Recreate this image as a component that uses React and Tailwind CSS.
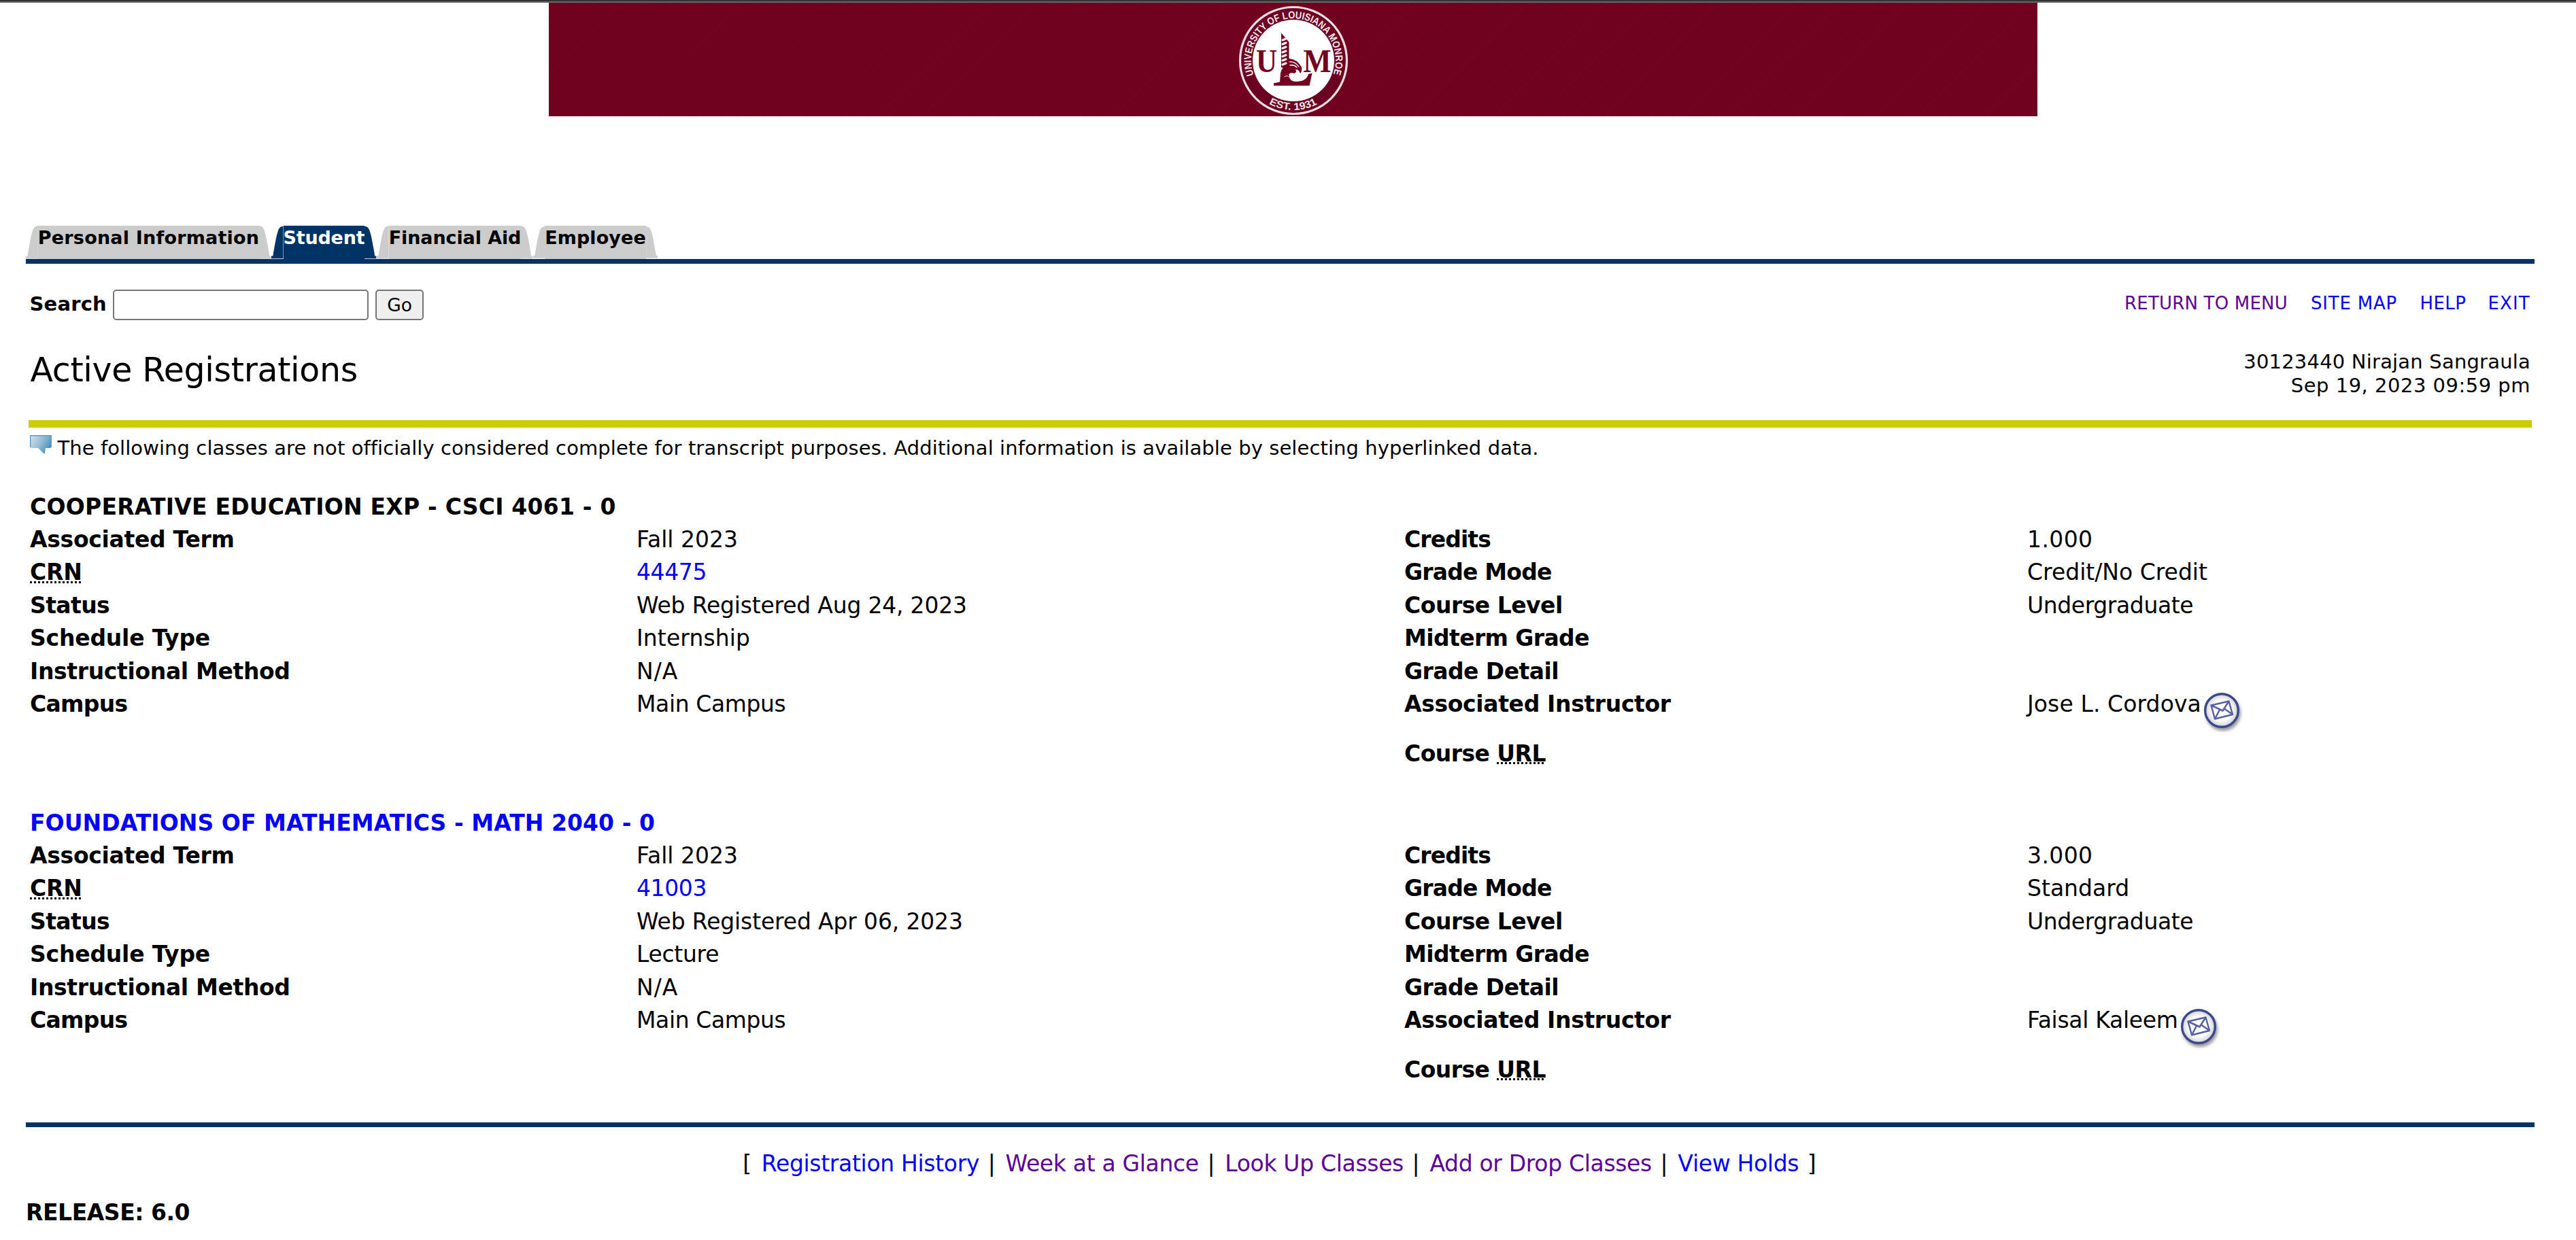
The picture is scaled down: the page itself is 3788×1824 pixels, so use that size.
const TABS = [
  { label: 'Personal Information', width: 'w-[361px]', tracking: 'tracking-[0.2px]' },
  { label: 'Student', width: 'w-[155px]', tracking: 'tracking-[-0.2px]', active: true },
  { label: 'Financial Aid', width: 'w-[230px]', tracking: 'tracking-[-0.1px]' },
  { label: 'Employee', width: 'w-[183px]', tracking: 'tracking-[0.1px]' },
];

const COURSES = [
  {
    title: 'COOPERATIVE EDUCATION EXP - CSCI 4061 - 0',
    titleClass: 'text-black tracking-[0.22px]',
    crn: '44475',
    status: 'Web Registered Aug 24, 2023',
    statusTracking: 'tracking-[-0.2px]',
    type: 'Internship',
    typeTracking: 'tracking-[0.1px]',
    credits: '1.000',
    mode: 'Credit/No Credit',
    instructor: 'Jose L. Cordova',
    instructorTracking: 'tracking-[0.1px]',
  },
  {
    title: 'FOUNDATIONS OF MATHEMATICS - MATH 2040 - 0',
    titleClass: 'text-[#0000ff] tracking-[0.06px]',
    crn: '41003',
    status: 'Web Registered Apr 06, 2023',
    statusTracking: 'tracking-[-0.15px]',
    type: 'Lecture',
    typeTracking: 'tracking-[-0.3px]',
    credits: '3.000',
    mode: 'Standard',
    instructor: 'Faisal Kaleem',
    instructorTracking: 'tracking-[-0.3px]',
  },
];

const FOOTER_LINKS = [
  { label: 'Registration History', color: 'text-[#0000ff]' },
  { label: 'Week at a Glance', color: 'text-[#5c0096]' },
  { label: 'Look Up Classes', color: 'text-[#5c0096]' },
  { label: 'Add or Drop Classes', color: 'text-[#5c0096]' },
  { label: 'View Holds', color: 'text-[#0000ff]' },
];

function Seal() {
  return (
    <svg className="mt-[4px] ml-[1014px] block h-[162px] w-[162px]" viewBox="-81 -81 162 162">
      <defs>
        <path id="seal-top" d="M-58.3 21.2 A62 62 0 1 1 58.3 21.2" />
        <path id="seal-bottom" d="M-36 63.5 A73 73 0 0 0 36 63.5" />
      </defs>
      <circle r="78.5" fill="#6b0022" stroke="#efdfe4" strokeWidth="3.2" />
      <circle r="60" fill="#fff" />
      <text fill="#f3e6ea" fontFamily="Liberation Sans, sans-serif" fontWeight="bold" fontSize="15">
        <textPath href="#seal-top" textLength="236" lengthAdjust="spacingAndGlyphs">UNIVERSITY OF LOUISIANA MONROE</textPath>
      </text>
      <text fill="#f3e6ea" fontFamily="Liberation Sans, sans-serif" fontWeight="bold" fontSize="15">
        <textPath href="#seal-bottom" textLength="74" lengthAdjust="spacingAndGlyphs">EST. 1931</textPath>
      </text>
      <g fill="#72001e">
        <text x="-55" y="16.5" fontFamily="Liberation Serif, serif" fontWeight="bold" fontSize="48" textLength="31" lengthAdjust="spacingAndGlyphs">U</text>
        <text x="14.5" y="16.5" fontFamily="Liberation Serif, serif" fontWeight="bold" fontSize="48" textLength="41" lengthAdjust="spacingAndGlyphs">M</text>
        <path d="M-20 -43 L-6.500 -27 L-6.500 22 Q-6 31 4 31 Q19 31 22 20 L27.500 18.500 L23.500 37 L-29 37 L-29 33.500 L-20 31.500 L-19 19 Q-18 13 -15 11 L-18 10 L-18 -40 Z" />
        <path d="M-7 -3 Q6 -2 12 10 Q13 16 10 19 Q8 13 3 13 Q6 17 1 19 Q-4 17 -7 20 Z" />
      </g>
      <g fill="none" stroke="#fff" strokeLinecap="round">
        <path d="M-16 -30 L-11 -32 M-16 -24 L-11 -26 M-16 -18 L-11 -20 M-16 -12 L-11 -14 M-16 -6 L-11 -8 M-16 0 L-11 -2 M-16 6 L-11 4" strokeWidth="3" />
        <path d="M-6 2 Q2 1 8 9" strokeWidth="1.200" />
        <path d="M-5 7 Q1 6 5 10" strokeWidth="1.500" />
        <path d="M-13 24 Q-9 21 -7 24" strokeWidth="1" />
      </g>
    </svg>
  );
}

function TabEdge({ fill, flip }) {
  return (
    <svg className={flip ? 'block h-[49px] w-[18px] -scale-x-100' : 'block h-[49px] w-[18px]'} viewBox="0 0 18 49">
      <path d="M18 0 C13 .5 11.500 3 10 7.500 C7.500 15 6.500 22 5 30 C4 36 3 40 2.500 45 H0 V49 H18 Z" fill={fill} />
    </svg>
  );
}

function Tab({ label, width, tracking, active }) {
  const fill = active ? '#003366' : '#cccccc';
  return (
    <div className={`flex h-[49px] ${width}`}>
      <TabEdge fill={fill} />
      <div
        className={`flex-1 whitespace-nowrap text-[27px] leading-[35px] font-bold ${tracking} ${
          active ? 'bg-[#003366] text-white' : 'bg-[#cccccc] text-black'
        }`}
      >
        {label}
      </div>
      <TabEdge fill={fill} flip />
    </div>
  );
}

function InfoBubble() {
  return (
    <svg className="mt-[1px] block h-[28px] w-[32px] shrink-0" viewBox="0 0 32 28">
      <defs>
        <linearGradient id="bubble" x1="0" y1="0" x2="1" y2="0.5">
          <stop offset="0" stopColor="#d3e3ee" />
          <stop offset="0.6" stopColor="#8fb9d3" />
          <stop offset="1" stopColor="#4f92bd" />
        </linearGradient>
      </defs>
      <path d="M.7 .7 H31.300 V17.500 Q31.300 19 29.500 19 H23 L22 27 H20 L12 19 H2.500 Q.7 19 .7 17.500 Z" fill="url(#bubble)" />
      <path d="M.7 18 V.7 H31.300 V18" fill="none" stroke="#5e9cc3" strokeWidth="1.400" />
    </svg>
  );
}

function MailIcon() {
  return (
    <svg className="mt-[3.5px] block h-[62px] w-[62px]" viewBox="0 0 62 62">
      <defs>
        <filter id="mail-shadow" x="-20%" y="-20%" width="150%" height="150%">
          <feDropShadow dx="2" dy="4" stdDeviation="2" floodColor="#555" floodOpacity="0.6" />
        </filter>
        <radialGradient id="mail-face">
          <stop offset="0.6" stopColor="#fff" />
          <stop offset="1" stopColor="#cfcfd6" />
        </radialGradient>
      </defs>
      <circle cx="30" cy="30" r="24.300" fill="url(#mail-face)" stroke="#3b4a8c" strokeWidth="3.400" filter="url(#mail-shadow)" />
      <g stroke="#5663a0" strokeWidth="2.500" strokeLinejoin="round">
        <path d="M14.500 22.500 L40.500 16.500 L46 36 L20 42.500 Z" fill="#fff" />
        <path d="M14.500 22.500 L31.500 30.500 L40.500 16.500 M27 29 L20 42.500 M34 27.500 L46 36" fill="none" />
      </g>
    </svg>
  );
}

function Row({ label, tracking, value, valueClass = '', label2, tracking2, value2, value2Class = '', tall }) {
  return (
    <div
      className={`grid grid-cols-[892px_1129px_916px_1fr] whitespace-nowrap ${tall ? 'h-[73px]' : 'h-[48.4px]'}`}
    >
      <div className={`font-bold ${tracking}`}>{label}</div>
      <div className={valueClass}>{value}</div>
      <div className={`font-bold ${tracking2}`}>{label2}</div>
      <div className={value2Class}>{value2}</div>
    </div>
  );
}

function Abbr({ children }) {
  return (
    <span className="relative inline-block">
      {children}
      <span className="absolute bottom-[9px] left-0 h-[3px] w-full bg-[repeating-linear-gradient(90deg,#000_0_3px,transparent_3px_6px)]" />
    </span>
  );
}

function Course({ course }) {
  return (
    <section className="h-[465px] pl-[44px] text-[33px] leading-[48.4px]">
      <h2 className={`h-[48.4px] font-bold whitespace-nowrap ${course.titleClass}`}>{course.title}</h2>
      <Row
        label="Associated Term" tracking="tracking-[-0.3px]" value="Fall 2023"
        label2="Credits" tracking2="tracking-[-0.9px]" value2={course.credits} value2Class="tracking-[0.4px]"
      />
      <Row
        label={<Abbr>CRN</Abbr>} tracking="tracking-[-0.2px]" value={course.crn} valueClass="text-[#0000ff] tracking-[-0.4px]"
        label2="Grade Mode" tracking2="tracking-[-0.8px]" value2={course.mode}
      />
      <Row
        label="Status" tracking="tracking-[-0.6px]" value={course.status} valueClass={course.statusTracking}
        label2="Course Level" tracking2="tracking-[-0.5px]" value2="Undergraduate" value2Class="tracking-[-0.4px]"
      />
      <Row
        label="Schedule Type" tracking="tracking-[-0.2px]" value={course.type} valueClass={course.typeTracking}
        label2="Midterm Grade" tracking2="tracking-[-0.6px]"
      />
      <Row
        label="Instructional Method" tracking="tracking-[-0.35px]" value="N/A" valueClass="tracking-[1px]"
        label2="Grade Detail" tracking2="tracking-[-0.55px]"
      />
      <Row
        tall
        label="Campus" tracking="tracking-[-0.7px]" value="Main Campus" valueClass="tracking-[-0.4px]"
        label2="Associated Instructor" tracking2="tracking-[-0.35px]"
        value2={<>{course.instructor}<MailIcon /></>} value2Class={`flex items-start ${course.instructorTracking}`}
      />
      <Row label2={<>Course <Abbr>URL</Abbr></>} tracking2="tracking-[-0.55px]" />
    </section>
  );
}

export default function App() {
  return (
    <div className="h-[1824px] w-[3788px] overflow-hidden bg-white font-['DejaVu_Sans',Verdana,sans-serif] text-black">
      <div className="h-[4px] border-b-2 border-[#666666] bg-[#333333]" />
      <header className="ml-[807px] flex h-[167px] w-[2189px] bg-[#72001e] bg-[repeating-linear-gradient(135deg,#72001e_0_6px,#68061f_7px_8px,#72001e_9px)]">
        <Seal />
      </header>

      <nav className="mt-[161px] mr-[61px] ml-[38px] flex border-b-[7px] border-[#003366]">
        {TABS.map((tab) => (
          <Tab key={tab.label} {...tab} />
        ))}
      </nav>

      <div className="mt-[38px] mr-[67px] ml-[43.5px] flex h-[44.5px] items-start">
        <label className="w-[122.5px] text-[29px] leading-[42px] font-bold tracking-[0.2px]" htmlFor="search">Search</label>
        <input id="search" className="h-[44.5px] w-[376px] rounded-[5px] border-2 border-[#767676] bg-white" />
        <button className="ml-[10px] h-[44.5px] w-[71px] rounded-[5px] border-2 border-[#767676] bg-[#efefef] text-[26.5px] leading-[42px]">Go</button>
        <div className="ml-auto flex text-[26px] leading-[40px] whitespace-nowrap">
          <a className="w-[274px] tracking-[0.2px] text-[#5c0096]">RETURN TO MENU</a>
          <a className="w-[160.5px] tracking-[0.8px] text-[#0000ff]">SITE MAP</a>
          <a className="w-[100px] tracking-[0.4px] text-[#0000ff]">HELP</a>
          <a className="w-[62.5px] tracking-[1.1px] text-[#0000ff]">EXIT</a>
        </div>
      </div>

      <div className="mt-[44.5px] mr-[67px] ml-[44.5px] flex h-[103px] items-start justify-between">
        <h1 className="text-[49px] leading-[60px] tracking-[-0.34px]">Active Registrations</h1>
        <div className="text-right text-[29px] leading-[35px]">
          <div className="tracking-[0.2px]">30123440 Nirajan Sangraula</div>
          <div className="tracking-[0.5px]">Sep 19, 2023 09:59 pm</div>
        </div>
      </div>
      <div className="mr-[65px] ml-[42px] h-[11px] bg-[#cccc00]" />

      <div className="mt-[10px] ml-[44px] flex h-[40px] items-start gap-[8.5px] text-[29px] leading-[40px] tracking-[0.08px] whitespace-nowrap">
        <InfoBubble />
        <p>The following classes are not officially considered complete for transcript purposes. Additional information is available by selecting hyperlinked data.</p>
      </div>

      <main className="mt-[42.6px] mb-[-0.6px]">
        {COURSES.map((course) => (
          <Course key={course.crn} course={course} />
        ))}
      </main>

      <footer className="mr-[61px] ml-[38px] border-t-[7px] border-[#003366] text-[33px] leading-[48.4px] whitespace-nowrap">
        <div className="mt-[30px] text-center tracking-[2.1px]">
          {'[ '}
          {FOOTER_LINKS.map((link, i) => (
            <span key={link.label}>
              {i > 0 && ' | '}
              <a className={`tracking-[-0.33px] ${link.color}`}>{link.label}</a>
            </span>
          ))}
          {' ]'}
        </div>
        <div className="mt-[23.6px] font-bold tracking-[-0.45px]">RELEASE: 6.0</div>
      </footer>
    </div>
  );
}
